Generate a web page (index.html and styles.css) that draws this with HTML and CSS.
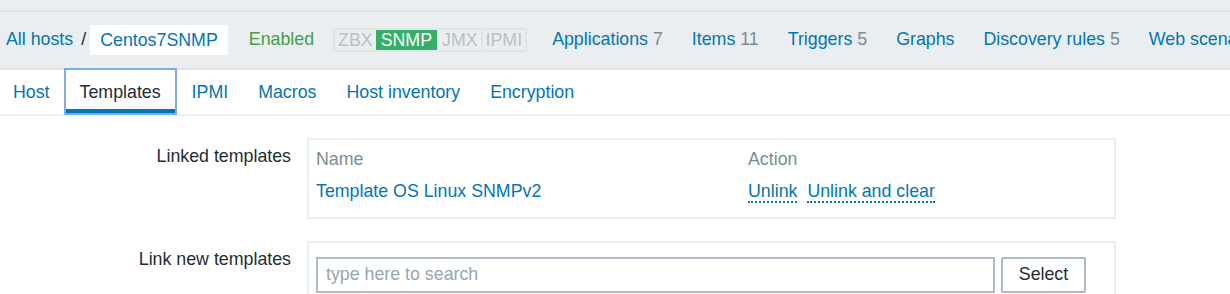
FILE: index.html
```html
<!DOCTYPE html>
<html>
<head>
<meta charset="utf-8">
<link rel="stylesheet" href="styles.css">
</head>
<body>
<div class="top-strip"></div>
<div class="host-bar">
  <a class="crumb">All hosts</a>
  <span class="sep">/</span>
  <span class="host-name">Centos7SNMP</span>
  <span class="status">Enabled</span>
  <span class="badges">
    <span class="badge">ZBX</span><span class="badge on">SNMP</span><span class="badge">JMX</span><span class="badge">IPMI</span>
  </span>
  <a class="nav">Applications <span class="count">7</span></a>
  <a class="nav">Items <span class="count">11</span></a>
  <a class="nav">Triggers <span class="count">5</span></a>
  <a class="nav">Graphs</a>
  <a class="nav">Discovery rules <span class="count">5</span></a>
  <a class="nav">Web scenarios</a>
</div>
<div class="tabs">
  <a class="tab">Host</a>
  <a class="tab active">Templates</a>
  <a class="tab">IPMI</a>
  <a class="tab">Macros</a>
  <a class="tab">Host inventory</a>
  <a class="tab">Encryption</a>
</div>
<div class="form">
  <div class="form-row">
    <div class="label">Linked templates</div>
    <div class="field-box linked">
      <div class="trow head">
        <div class="c-name">Name</div>
        <div class="c-action">Action</div>
      </div>
      <div class="trow">
        <div class="c-name"><a class="link">Template OS Linux SNMPv2</a></div>
        <div class="c-action"><a class="dotted">Unlink</a> <a class="dotted">Unlink and clear</a></div>
      </div>
    </div>
  </div>
  <div class="form-row">
    <div class="label">Link new templates</div>
    <div class="field-box search">
      <div class="search-input">type here to search</div>
      <button class="btn">Select</button>
    </div>
  </div>
</div>
</body>
</html>
```
FILE: styles.css
```css
html, body {
  margin: 0;
  padding: 0;
  background: #ffffff;
  overflow: hidden;
}
body {
  width: 1230px;
  height: 294px;
  font-family: "Liberation Sans", Arial, sans-serif;
  font-size: 17.8px;
  color: #1f2c33;
}
a { color: #0275b8; text-decoration: none; }

.top-strip {
  height: 10px;
  background: #ebeef0;
  border-bottom: 2px solid #dfe4e7;
}
.host-bar {
  height: 55px;
  background: #ebeef0;
  border-bottom: 2px solid #dfe4e7;
  display: flex;
  align-items: center;
  padding-left: 6px;
  padding-bottom: 1px;
  white-space: nowrap;
  overflow: hidden;
}
.sep {
  margin: 0 4px 0 8px;
  color: #1f2c33;
}
.host-name {
  background: #ffffff;
  color: #0275b8;
  height: 30px;
  line-height: 30px;
  padding: 0 10px;
  border-radius: 2px;
  box-sizing: border-box;
}
.status {
  color: #429e47;
  margin-left: 21px;
}
.badges {
  display: flex;
  margin-left: 19px;
  border: 2px solid #dfe4e7;
  background: #dfe4e7;
  border-radius: 3px;
  gap: 2px;
  height: 24px;
  box-sizing: border-box;
}
.badge {
  background: #ebeef0;
  color: #b7c1c8;
  padding: 0 3px;
  line-height: 20px;
  height: 20px;
}
.badge.on {
  background: #34af67;
  color: #ffffff;
  margin-left: -2px;
  padding: 0 5px;
}
.nav { margin-left: 25px; }
.nav + .nav { margin-left: 29px; }
.count { color: #768d99; }

.tabs {
  display: flex;
  height: 44px;
  border-bottom: 2px solid #ebeef0;
  margin-left: -2px;
}
.tab {
  padding: 0 14px;
  border: 1px solid transparent;
  line-height: 42px;
}
.tab.active {
  color: #1f2c33;
  border: 2px solid #80aaf0;
  margin-top: -2px;
  margin-left: -1px;
  height: 43px;
  line-height: 44px;
  padding: 0 14px;
  box-shadow: inset 0 -4px 0 #0275b8;
}

.form {
  padding-top: 22px;
  display: flex;
  flex-direction: column;
  gap: 22px;
}
.form-row {
  display: flex;
  align-items: flex-start;
}
.label {
  width: 291px;
  text-align: right;
  padding-top: 7px;
  line-height: 22px;
  flex-shrink: 0;
}
.field-box {
  margin-left: 16px;
  width: 809px;
  border: 2px solid #ebeef0;
  box-sizing: border-box;
}
.linked {
  padding: 3px 7px 10px;
}
.trow {
  display: flex;
  height: 32px;
  align-items: center;
}
.trow.head { color: #768d99; }
.c-name { width: 432px; }
.dotted {
  border-bottom: 2px dotted #0275b8;
  margin-right: 5px;
}
.search {
  padding: 14px 7px 0;
  display: flex;
  gap: 6px;
  height: 60px;
}
.search-input {
  width: 679px;
  height: 36px;
  border: 2px solid #acbbc7;
  box-sizing: border-box;
  padding: 0 8px;
  line-height: 31px;
  color: #98a6b0;
}
.btn {
  width: 85px;
  height: 36px;
  border: 2px solid #acbbc7;
  border-radius: 2px;
  background: #ffffff;
  color: #1f2c33;
  font-family: "Liberation Sans", Arial, sans-serif;
  font-size: 17.8px;
  padding: 0 0 2px;
}
```
